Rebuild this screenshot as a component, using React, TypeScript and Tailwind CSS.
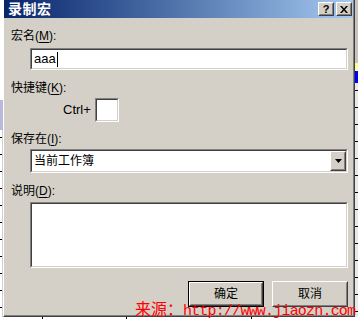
import React from 'react';

const font = { fontFamily: 'Tahoma, "Liberation Sans", "Noto Sans CJK SC", sans-serif' };

// sunken edit box (win classic)
function Sunken({ className = '', children }: { className?: string; children?: React.ReactNode }) {
  return (
    <div className={`border border-t-[#808080] border-l-[#808080] border-b-white border-r-white ${className}`}>
      <div className="w-full h-full border border-t-[#404040] border-l-[#404040] border-b-[#d4d0c8] border-r-[#d4d0c8] bg-white flex">
        {children}
      </div>
    </div>
  );
}

function Raised({ className = '', children }: { className?: string; children?: React.ReactNode }) {
  return (
    <div className={`bg-[#d4d0c8] border border-t-white border-l-white border-b-[#404040] border-r-[#404040] ${className}`}>
      <div className="w-full h-full border border-transparent border-b-[#808080] border-r-[#808080] flex items-center justify-center">
        {children}
      </div>
    </div>
  );
}

function Label({ text, k, className = '' }: { text: string; k: string; className?: string }) {
  return (
    <div className={`h-[16px] leading-[16px] text-[12px] text-black pl-[7px] ${className}`}>
      {text}(<span className="underline underline-offset-2">{k}</span>):
    </div>
  );
}

function Ticks({ count, color = 'bg-black' }: { count: number; color?: string }) {
  return (
    <div className="flex flex-col gap-[16px] pt-[7px]">
      {Array.from({ length: count }).map((_, i) => (
        <div key={i} className={`h-[1px] w-full ${color}`} />
      ))}
    </div>
  );
}

export default function App() {
  return (
    <div className="relative w-[358px] h-[319px] overflow-hidden bg-white" style={font}>
      <div className="flex h-[317px]">
        {/* spreadsheet behind, left */}
        <div className="w-[3px] flex flex-col">
          <div className="h-[100px] bg-white" />
          <div className="h-[30px] bg-[#b8b8d8]" />
          <div className="flex-1 bg-white border-r border-r-[#d0d0d0]">
            <Ticks count={11} />
          </div>
        </div>

        {/* dialog */}
        <div className="w-[352px] h-full flex flex-col bg-[#d4d0c8] border-l border-l-white border-r border-r-[#404040] border-b border-b-[#404040]">
          <div className="flex-1 flex flex-col border-r border-r-[#808080] border-b border-b-[#808080]">
            {/* title bar */}
            <div className="h-[18px] flex items-center justify-between bg-gradient-to-r from-[#0a246a] to-[#a6caf0] pl-[4px] pr-[1px]">
              <span className="text-white font-bold text-[14px] leading-none tracking-[0.5px]">录制宏</span>
              <div className="flex gap-[2px]">
                <Raised className="w-[16px] h-[14px]">
                  <span className="text-[11px] font-bold leading-none text-black" style={{ fontFamily: '"Liberation Sans", sans-serif' }}>?</span>
                </Raised>
                <Raised className="w-[16px] h-[14px]">
                  <svg width="8" height="7" viewBox="0 0 8 7">
                    <path d="M0 0h2l2 2.5L6 0h2L5 3.5 8 7H6L4 4.5 2 7H0l3-3.5z" fill="#000" />
                  </svg>
                </Raised>
              </div>
            </div>

            {/* body */}
            <div className="flex flex-col">
              <Label text="宏名" k="M" className="mt-[10px]" />
              <Sunken className="ml-[26px] mt-[4px] w-[318px] h-[22px]">
                <div className="flex items-center pl-[2px] text-[13px] text-black">
                  <span style={{ fontFamily: '"Liberation Sans", sans-serif' }}>aaa</span>
                  <span className="ml-[1px] w-[1px] h-[15px] bg-black" />
                </div>
              </Sunken>

              <Label text="快捷键" k="K" className="mt-[10px]" />
              <div className="mt-[2px] h-[24px] flex items-center ml-[59px] gap-[4px]">
                <span className="text-[13px] text-black" style={{ fontFamily: '"Liberation Sans", sans-serif' }}>Ctrl+</span>
                <Sunken className="w-[24px] h-[24px]" />
              </div>

              <Label text="保存在" k="I" className="mt-[9px]" />
              <Sunken className="ml-[26px] mt-[2px] w-[318px] h-[24px]">
                <div className="flex-1 flex items-center pl-[2px] text-[12px] text-black">当前工作簿</div>
                <Raised className="w-[16px] h-[20px] my-auto mr-0">
                  <svg width="7" height="4" viewBox="0 0 7 4">
                    <path d="M0 0h7L3.5 4z" fill="#000" />
                  </svg>
                </Raised>
              </Sunken>

              <Label text="说明" k="D" className="mt-[10px]" />
              <Sunken className="ml-[26px] mt-[3px] w-[318px] h-[66px]" />

              <div className="mt-[13px] flex justify-end gap-[8px] pr-[5px]">
                <div className="border border-black">
                  <Raised className="w-[74px] h-[24px]">
                    <span className="text-[12px] text-black">确定</span>
                  </Raised>
                </div>
                <Raised className="w-[76px] h-[26px]">
                  <span className="text-[12px] text-black">取消</span>
                </Raised>
              </div>
            </div>
          </div>
        </div>

        {/* spreadsheet behind, right */}
        <div className="flex-1 flex flex-col">
          <div className="h-[63px] bg-[#c8c4bc]" />
          <div className="h-[8px] bg-[#ffff99]" />
          <div className="h-[12px] bg-[#0000ff]" />
          <div className="flex-1 bg-[#e8e8e8]">
            <Ticks count={14} />
          </div>
        </div>
      </div>

      {/* bottom strip */}
      <div className="h-[2px] flex bg-white">
        <div className="w-[42px]" />
        <div className="w-[1px] bg-black" />
        <div className="w-[83px]" />
        <div className="w-[1px] bg-black" />
        <div className="w-[124px]" />
        <div className="w-[1px] bg-black" />
      </div>

      {/* watermark */}
      <div className="absolute left-[135px] top-[299px] flex items-baseline text-[#ff0000] leading-[18px] whitespace-nowrap">
        <span className="text-[16px]" style={{ fontFamily: '"Noto Sans CJK SC", sans-serif' }}>来源：</span>
        <span className="text-[15px] tracking-[-0.8px]" style={{ fontFamily: '"Liberation Mono", monospace' }}>http://www.jiaozn.com</span>
      </div>
    </div>
  );
}
